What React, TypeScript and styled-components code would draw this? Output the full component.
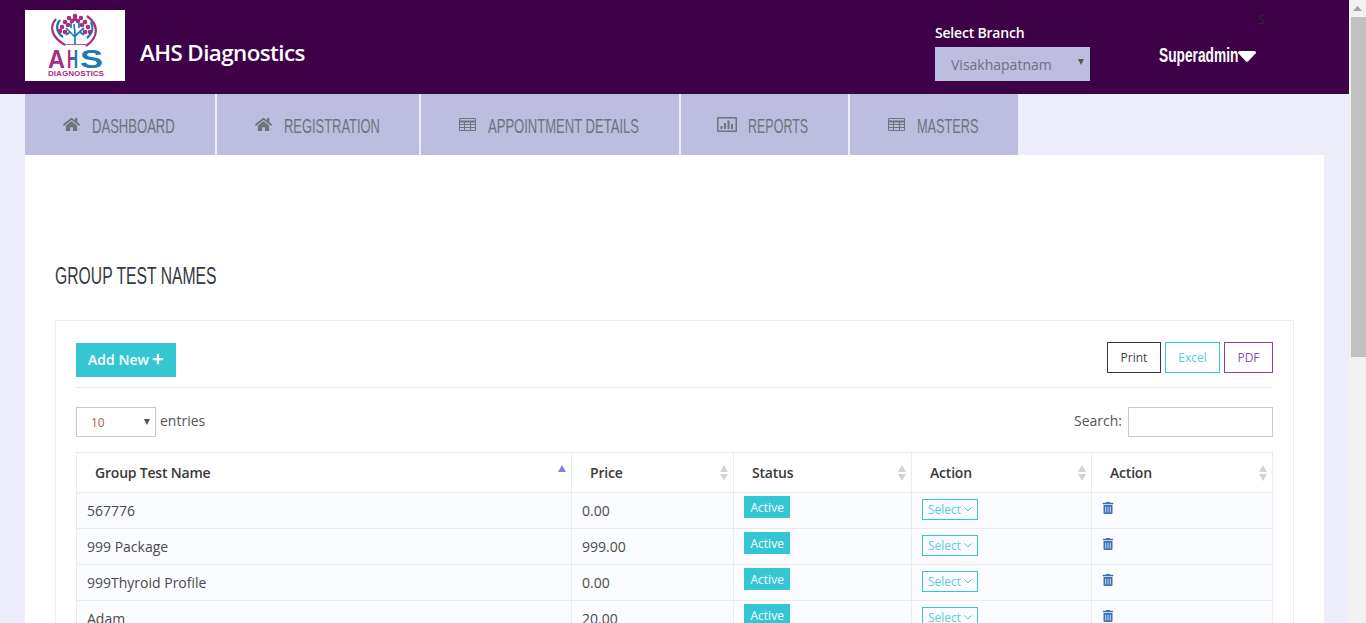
import { createGlobalStyle } from "styled-components";
import styled from "styled-components";
import { FaHome, FaPlus, FaTrashAlt } from "react-icons/fa";

const GlobalStyle = createGlobalStyle`
  html, body {
    margin: 0;
    height: 100%;
    overflow: hidden;
    background: #eeedfc;
    font-family: 'Open Sans', 'Liberation Sans', sans-serif;
    font-size: 14px;
    color: #444;
  }
  * { box-sizing: border-box; }
`;

function TableIcon() {
  return (
    <svg width="17" height="13" viewBox="0 0 17 13">
      <path d="M.5.5h16v12H.5z" fill="none" stroke="currentColor" />
      <path d="M0 3.500h17" stroke="currentColor" strokeWidth="2" />
      <path d="M1 6.500h15M1 9.500h15M5.500 4v8M11.500 4v8" fill="none" stroke="currentColor" />
    </svg>
  );
}

function ChartIcon() {
  return (
    <svg width="20" height="15" viewBox="0 0 20 15">
      <path d="M1 .75h18a.5.5 0 0 1 .25.25v13a.5.5 0 0 1-.25.25H1a.5.5 0 0 1-.25-.25V1A.5.5 0 0 1 1 .75z" fill="none" stroke="currentColor" strokeWidth="1.5" />
      <path d="M3.500 9h2v3h-2zM7 6h2v6H7zM10.500 3.500h2V12h-2zM14 7h2v5h-2z" fill="currentColor" />
    </svg>
  );
}

const navTabs = [
  { label: "DASHBOARD", icon: <FaHome />, width: 190, pad: 38, gap: 29, scale: 0.622 },
  { label: "REGISTRATION", icon: <FaHome />, width: 202, pad: 38, gap: 29, scale: 0.615 },
  { label: "APPOINTMENT DETAILS", icon: <TableIcon />, width: 258, pad: 38, gap: 29, scale: 0.621 },
  { label: "REPORTS", icon: <ChartIcon />, width: 167, pad: 36, gap: 31, scale: 0.595 },
  { label: "MASTERS", icon: <TableIcon />, width: 168, pad: 38, gap: 29, scale: 0.605 },
];

const rows = [
  { name: "567776", price: "0.00" },
  { name: "999 Package", price: "999.00" },
  { name: "999Thyroid Profile", price: "0.00" },
  { name: "Adam", price: "20.00" },
];

function Logo() {
  return (
    <svg width="100" height="71" viewBox="0 0 100 71">
      <defs>
        <linearGradient id="ahsH" x1="0" x2="1" y1="0" y2="0">
          <stop offset="0.45" stopColor="#a5307f" />
          <stop offset="0.55" stopColor="#1f77b4" />
        </linearGradient>
      </defs>
      <path d="M31 9C23 18 28 28 40 35" fill="none" stroke="#a5307f" strokeWidth="2.200" />
      <path d="M35 10C30 16 32 23 38 27" fill="none" stroke="#1f77b4" strokeWidth="2.400" />
      <path d="M62 6C74 15 74 27 61 36" fill="none" stroke="#a5307f" strokeWidth="2.200" />
      <path d="M66 12C69 18 67 24 62 28" fill="none" stroke="#1f77b4" strokeWidth="2.400" />
      <path d="M50 34V24M50 27L41 18M50 26L59 18M50 24L49 14M45 22L41 25M55 22L59 25M46 18L46 13M54 18L54 13" fill="none" stroke="#1f77b4" strokeWidth="1.700" />
      <path d="M39 34.500H61" stroke="#a5307f" strokeWidth="0.8" />
      {[[44, 8], [50, 6], [56, 8], [40, 12], [47, 11], [53, 11], [60, 12], [37, 17], [43, 15], [57, 15], [63, 17], [40, 22], [60, 22], [35, 21], [65, 22], [50, 9]].map(([cx, cy]) => (
        <circle key={`${cx}-${cy}`} cx={cx} cy={cy} r="2.300" fill="#a5307f" />
      ))}
      <LogoLetter x="23" y="58" fontSize="25" fill="#a5307f" textLength="17" lengthAdjust="spacingAndGlyphs">A</LogoLetter>
      <LogoLetter x="42" y="58" fontSize="25" fill="url(#ahsH)" textLength="11" lengthAdjust="spacingAndGlyphs">H</LogoLetter>
      <LogoLetter x="55" y="58" fontSize="25" fill="#1f77b4" textLength="23" lengthAdjust="spacingAndGlyphs">S</LogoLetter>
      <LogoLetter x="23" y="66" fontSize="7.500" fill="#a5307f" textLength="56" lengthAdjust="spacingAndGlyphs">DIAGNOSTICS</LogoLetter>
    </svg>
  );
}

function SortHead({ label, active }: { label: string; active?: boolean }) {
  return (
    <Th>
      {label}
      <SortArrows>
        <ArrowUp $active={active} />
        {!active && <ArrowDown />}
      </SortArrows>
    </Th>
  );
}

export default function App() {
  return (
    <Shell>
      <GlobalStyle />
      <Page>
        <Header>
          <LogoBox>
            <Logo />
          </LogoBox>
          <Brand>AHS Diagnostics</Brand>
          <BranchBlock>
            <BranchLabel>Select Branch</BranchLabel>
            <SelectWrap>
              <BranchSelect defaultValue="Visakhapatnam">
                <option>Visakhapatnam</option>
              </BranchSelect>
            </SelectWrap>
          </BranchBlock>
          <UserBlock>
            <UserInitial>S</UserInitial>
            <UserRow>
              <UserName>Superadmin</UserName>
              <UserCaret viewBox="0 0 18 11">
                <path d="M0 1.500Q0 0 2 0H16Q18 0 18 1.500Q18 2.500 17 3L10 10.500Q9 11 8 10.500L1 3Q0 2.500 0 1.500Z" fill="#fff" />
              </UserCaret>
            </UserRow>
          </UserBlock>
        </Header>

        <Nav>
          {navTabs.map((tab) => (
            <NavTab key={tab.label} $width={tab.width} $pad={tab.pad}>
              <NavIcon $gap={tab.gap}>{tab.icon}</NavIcon>
              <NavLabel $scale={tab.scale}>{tab.label}</NavLabel>
            </NavTab>
          ))}
        </Nav>

        <Content>
          <Title>GROUP TEST NAMES</Title>
          <Card>
            <Toolbar>
              <AddButton>
                Add New <FaPlus size={12} />
              </AddButton>
              <Exports>
                <ExportButton $color="#343a40" $text="#444" $width={54}>Print</ExportButton>
                <ExportButton $color="#34c6d3" $text="#5accd8" $width={55}>Excel</ExportButton>
                <ExportButton $color="#8e3fb5" $text="#8e4fb5" $width={49}>PDF</ExportButton>
              </Exports>
            </Toolbar>

            <Filters>
              <EntriesRow>
                <SelectWrap>
                  <EntriesSelect defaultValue="10">
                    <option>10</option>
                  </EntriesSelect>
                </SelectWrap>
                entries
              </EntriesRow>
              <SearchRow>
                Search:
                <SearchInput />
              </SearchRow>
            </Filters>

            <Table>
              <colgroup>
                <col width="495" />
                <col width="162" />
                <col width="178" />
                <col width="180" />
                <col width="181" />
              </colgroup>
              <thead>
                <tr>
                  <SortHead label="Group Test Name" active />
                  <SortHead label="Price" />
                  <SortHead label="Status" />
                  <SortHead label="Action" />
                  <SortHead label="Action" />
                </tr>
              </thead>
              <tbody>
                {rows.map((row) => (
                  <tr key={row.name}>
                    <Td>{row.name}</Td>
                    <Td>{row.price}</Td>
                    <BadgeCell>
                      <Badge>Active</Badge>
                    </BadgeCell>
                    <ActionCell>
                      <RowSelect>
                        Select
                        <svg width="8" height="5" viewBox="0 0 8 5">
                          <path d="M.5.5L4 4 7.500.5" fill="none" stroke="#34c6d3" strokeWidth="0.9" />
                        </svg>
                      </RowSelect>
                    </ActionCell>
                    <TrashCell>
                      <FaTrashAlt size={12} />
                    </TrashCell>
                  </tr>
                ))}
              </tbody>
            </Table>
          </Card>
        </Content>
      </Page>

      <ScrollBar>
        <ScrollButton>
          <svg width="9" height="5" viewBox="0 0 9 5">
            <path d="M4.500 0L9 5H0Z" fill="#a3a3a3" />
          </svg>
        </ScrollButton>
        <ScrollThumb />
      </ScrollBar>
    </Shell>
  );
}

const LogoLetter = styled.text`
  font-family: 'Liberation Sans', sans-serif;
  font-weight: 700;
`;

const Shell = styled.div`
  display: flex;
  height: 100vh;
  overflow: hidden;
`;

const Page = styled.div`
  flex: 1;
  min-width: 0;
  overflow: hidden;
`;

const ScrollBar = styled.div`
  width: 17px;
  flex: none;
  background: #f1f1f1;
`;

const ScrollButton = styled.div`
  height: 17px;
  display: flex;
  align-items: center;
  justify-content: center;
`;

const ScrollThumb = styled.div`
  height: 340px;
  margin-left: 2px;
  background: #c1c1c1;
`;

const Header = styled.header`
  height: 94px;
  background: #3e0046;
  display: flex;
  padding: 10px 0 0 25px;
`;

const LogoBox = styled.div`
  width: 100px;
  height: 71px;
  background: #fff;
`;

const Brand = styled.div`
  margin: 25px 0 0 15px;
  font-size: 22.400px;
  line-height: 36px;
  font-weight: 600;
  letter-spacing: -0.6px;
  color: #fff;
`;

const BranchBlock = styled.div`
  width: 155px;
  margin: 13px 0 0 auto;
`;

const BranchLabel = styled.div`
  font-size: 14px;
  line-height: 19px;
  font-weight: 600;
  letter-spacing: -0.2px;
  color: #fff;
  margin-bottom: 5px;
`;

const SelectWrap = styled.div`
  position: relative;

  &::after {
    content: "";
    position: absolute;
    right: 6px;
    top: 12px;
    border-left: 3.500px solid transparent;
    border-right: 3.500px solid transparent;
    border-top: 6px solid #555;
    pointer-events: none;
  }
`;

const BranchSelect = styled.select`
  display: block;
  width: 155px;
  height: 34px;
  padding: 0 0 0 16px;
  border: 0;
  border-radius: 0;
  appearance: none;
  background: #bdbde0;
  color: #6f6f80;
  font-family: inherit;
  font-size: 14px;
`;

const UserBlock = styled.div`
  width: 190px;
  margin-left: 69px;
  position: relative;
`;

const UserInitial = styled.div`
  position: absolute;
  top: 2px;
  left: 99px;
  font-size: 12px;
  line-height: 15px;
  color: #2b2b33;
`;

const UserRow = styled.div`
  display: flex;
  align-items: center;
  margin-top: 32px;
  height: 26px;
`;

const UserName = styled.span`
  display: inline-block;
  width: 79px;
  font-family: 'Liberation Sans', sans-serif;
  font-size: 20px;
  font-weight: 700;
  color: #fff;
  white-space: nowrap;
  transform: scaleX(0.687);
  transform-origin: left center;
`;

const UserCaret = styled.svg`
  width: 18px;
  height: 11px;
  margin-top: 3px;
`;

const Nav = styled.nav`
  display: flex;
  gap: 2px;
  padding-left: 25px;
  height: 61px;
`;

const NavTab = styled.a<{ $width: number; $pad: number }>`
  width: ${(p) => p.$width}px;
  padding-left: ${(p) => p.$pad}px;
  display: flex;
  align-items: center;
  background: #bdbde0;
  color: #6c757d;
  white-space: nowrap;
  overflow: hidden;
`;

const NavIcon = styled.span<{ $gap: number }>`
  width: ${(p) => p.$gap}px;
  flex: none;
  display: flex;
  font-size: 17px;
`;

const NavLabel = styled.span<{ $scale: number }>`
  padding-top: 2px;
  font-family: 'Liberation Sans', sans-serif;
  font-size: 21px;
  transform: scaleX(${(p) => p.$scale});
  transform-origin: left center;
`;

const Content = styled.main`
  width: 1299px;
  margin-left: 25px;
  padding: 103px 30px 0;
  background: #fff;
  min-height: 924px;
`;

const Title = styled.h2`
  margin: 0 0 26px;
  height: 36px;
  line-height: 36px;
  font-family: 'Liberation Sans', sans-serif;
  font-size: 23px;
  font-weight: 400;
  color: #343a40;
  white-space: nowrap;
  transform: scaleX(0.683);
  transform-origin: left center;
`;

const Card = styled.section`
  border: 1px solid #e9ecef;
  padding: 21px 20px 20px;
  min-height: 760px;
`;

const Toolbar = styled.div`
  display: flex;
  justify-content: space-between;
  height: 46px;
  border-bottom: 1px solid #e9ecef;
`;

const AddButton = styled.button`
  width: 100px;
  height: 34px;
  margin-top: 1px;
  padding: 0 0 2px;
  display: inline-flex;
  align-items: center;
  justify-content: center;
  gap: 3px;
  border: 0;
  background: #34c6d3;
  color: #fff;
  font-family: inherit;
  font-size: 14px;
  font-weight: 600;
  letter-spacing: 0;
`;

const Exports = styled.div`
  display: flex;
  gap: 4px;
`;

const ExportButton = styled.button<{ $color: string; $text: string; $width: number }>`
  width: ${(p) => p.$width}px;
  height: 31px;
  border: 1px solid ${(p) => p.$color};
  background: #fff;
  color: ${(p) => p.$text};
  font-family: inherit;
  font-size: 12px;
  padding: 0;
`;

const Filters = styled.div`
  display: flex;
  justify-content: space-between;
  margin: 19px 0 15px;
`;

const EntriesRow = styled.label`
  display: flex;
  align-items: flex-start;
  gap: 4px;
  line-height: 28px;
  color: #555;
`;

const EntriesSelect = styled.select`
  display: block;
  width: 80px;
  height: 30px;
  padding: 0 0 0 14px;
  border: 1px solid #c4cad8;
  border-radius: 0;
  appearance: none;
  background: #fff;
  color: #b0604c;
  font-family: inherit;
  font-size: 12px;
`;

const SearchRow = styled.label`
  display: flex;
  align-items: flex-start;
  gap: 6px;
  line-height: 28px;
  color: #555;
`;

const SearchInput = styled.input`
  width: 145px;
  height: 30px;
  border: 1px solid #c4cad8;
  background: #fff;
  padding: 0 8px;
`;

const Table = styled.table`
  width: 1196px;
  table-layout: fixed;
  border-collapse: collapse;
  border: 1px solid #e9ecef;
`;

const Th = styled.th`
  position: relative;
  height: 40px;
  padding: 0 18px;
  border: 1px solid #e9ecef;
  text-align: left;
  font-size: 14px;
  font-weight: 600;
  letter-spacing: -0.2px;
  color: #3a3a3a;
  background: #fff;
`;

const SortArrows = styled.span`
  position: absolute;
  right: 5px;
  top: 12px;
  display: flex;
  flex-direction: column;
  gap: 2px;
`;

const ArrowUp = styled.i<{ $active?: boolean }>`
  display: block;
  border-left: 4.500px solid transparent;
  border-right: 4.500px solid transparent;
  border-bottom: 7px solid ${(p) => (p.$active ? "#7f80d8" : "#d3d3d3")};
`;

const ArrowDown = styled.i`
  display: block;
  border-left: 4.500px solid transparent;
  border-right: 4.500px solid transparent;
  border-top: 7px solid #d3d3d3;
`;

const Td = styled.td`
  height: 36px;
  padding: 8px 10px 0;
  border: 1px solid #e9ecef;
  vertical-align: top;
  background: #fbfcff;
  font-size: 14px;
  line-height: 19px;
  color: #4a4a4a;
`;

const BadgeCell = styled(Td)`
  padding-top: 3px;
`;

const Badge = styled.span`
  display: inline-block;
  height: 22px;
  padding: 0 6.500px;
  background: #34c6d3;
  color: #fff;
  font-size: 12px;
  line-height: 23px;
  vertical-align: top;
`;

const ActionCell = styled(Td)`
  padding-top: 6px;
`;

const RowSelect = styled.span`
  display: inline-flex;
  align-items: center;
  gap: 3px;
  width: 56px;
  height: 21px;
  padding-left: 5px;
  border: 1px solid #34c6d3;
  color: #5accd8;
  font-size: 12px;
  line-height: 19px;
  vertical-align: top;
`;

const TrashCell = styled(Td)`
  padding-top: 9px;
  line-height: 0;
  color: #3a72b8;
`;
